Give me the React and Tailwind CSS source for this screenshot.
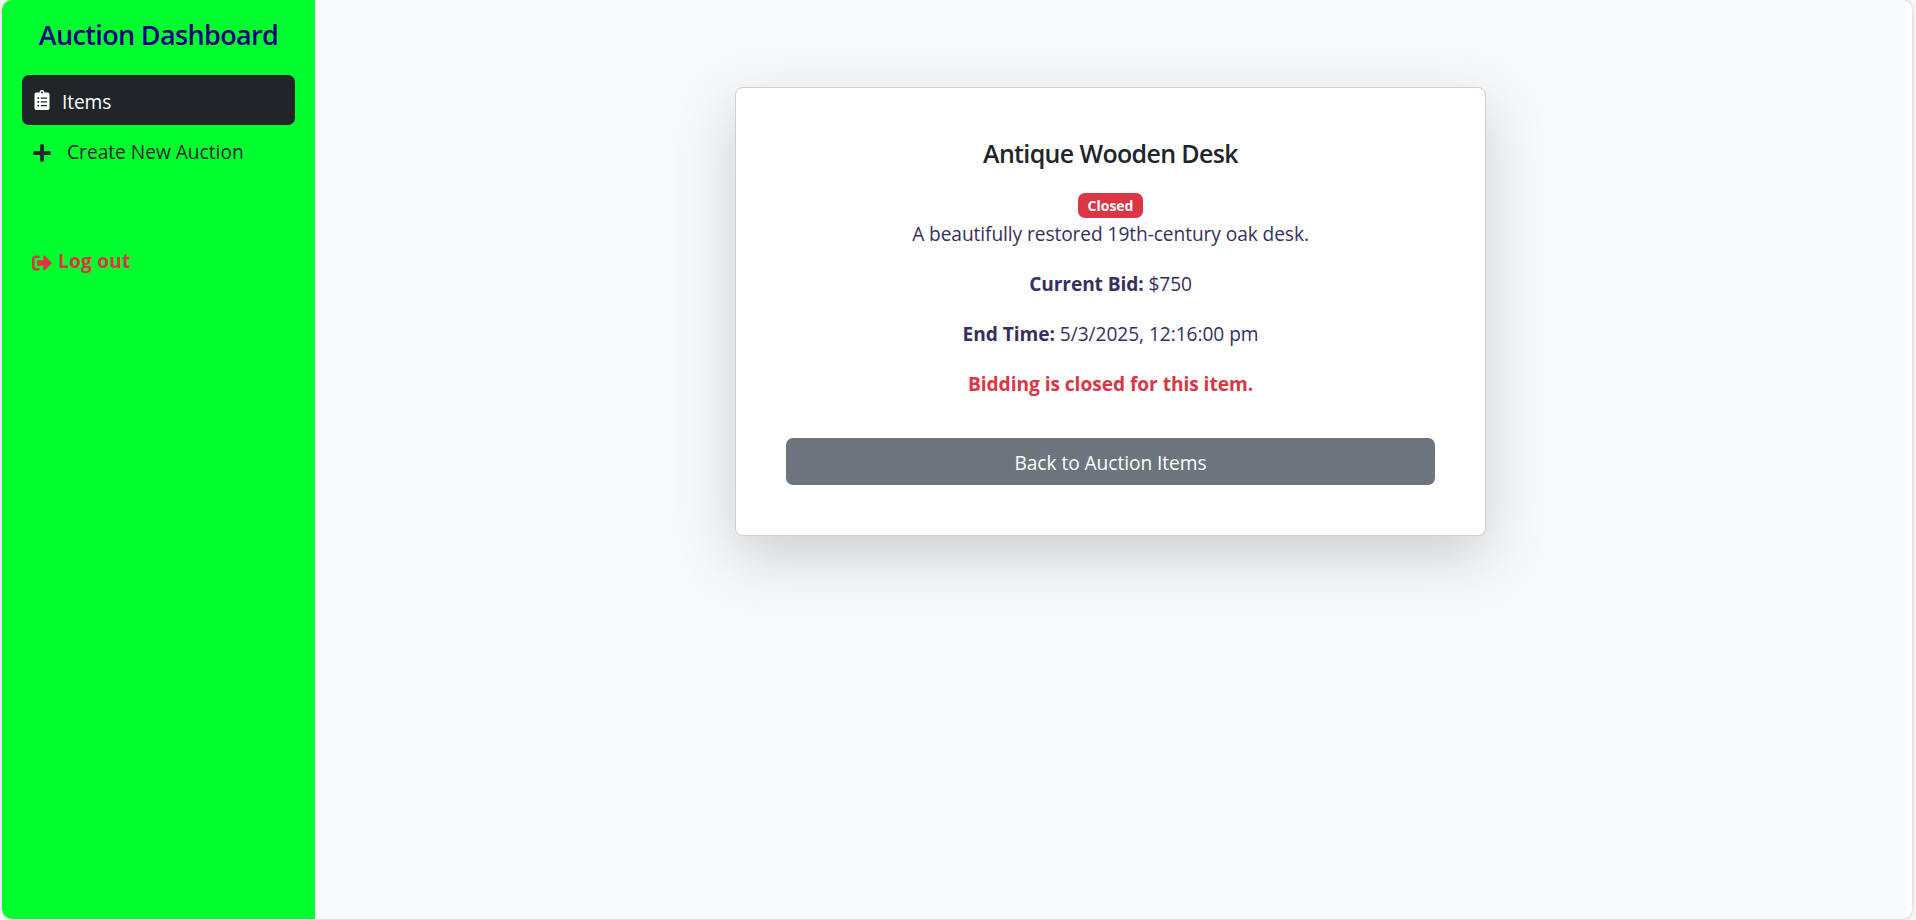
import { FaClipboardList, FaPlus } from "react-icons/fa";

function SignOutIcon({ className }) {
  return (
    <svg viewBox="0 0 512 512" fill="currentColor" className={className}>
      <path d="M497 273L329 441c-15 15-41 4.500-41-17v-96H152c-13.300 0-24-10.700-24-24v-96c0-13.300 10.700-24 24-24h136V88c0-21.400 25.900-32 41-17l168 168c9.300 9.400 9.300 24.600 0 34zM192 436v-40c0-6.600-5.400-12-12-12H96c-17.700 0-32-14.300-32-32V160c0-17.700 14.300-32 32-32h84c6.600 0 12-5.400 12-12V76c0-6.600-5.400-12-12-12H96c-53 0-96 43-96 96v192c0 53 43 96 96 96h84c6.600 0 12-5.400 12-12z" />
    </svg>
  );
}

function Sidebar() {
  return (
    <aside className="flex w-[313px] shrink-0 flex-col bg-[#00ff2f] px-5 pt-[15px]">
      <h1 className="text-center text-[27px] font-semibold leading-[39px] tracking-[-0.65px] whitespace-nowrap text-[#0b0080]">
        Auction Dashboard
      </h1>
      <nav className="mt-[21px] flex flex-col">
        <a className="flex h-[50px] w-[273px] items-center rounded-[7px] bg-[#212529] pl-[10px] text-white">
          <FaClipboardList className="size-5" />
          <span className="ml-[10px] pt-1 tracking-[-0.1px]">Items</span>
        </a>
        <a className="flex h-[50px] items-center pl-[10px] text-[#212529]">
          <FaPlus className="mt-[5px] size-5" />
          <span className="ml-[15px] pt-1">Create New Auction</span>
        </a>
      </nav>
      <a className="mt-[61px] flex h-[50px] items-center pl-[10px] font-bold text-[#dc3545]">
        <SignOutIcon className="mt-1 size-5" />
        <span className="ml-[6px] pt-px tracking-[0.2px]">Log out</span>
      </a>
    </aside>
  );
}

function AuctionCard() {
  return (
    <section className="flex h-[449px] w-[751px] flex-col items-center rounded-[8px] border border-[#cfd0d1] bg-white px-[50px] pt-[48px] text-[#36305f] shadow-[0_20px_60px_rgba(0,0,0,0.175)]">
      <h2 className="text-[25px] font-semibold leading-[34px] tracking-[-0.65px] text-[#212529]">Antique Wooden Desk</h2>
      <span className="mt-[23px] flex h-[25px] items-center rounded-[7px] bg-[#dc3545] px-[10px] text-[14px] font-bold text-white">
        Closed
      </span>
      <p className="mt-px leading-[30px] tracking-[-0.080px]">A beautifully restored 19th-century oak desk.</p>
      <p className="mt-5 leading-[30px] tracking-[-0.1px]"><strong>Current Bid:</strong> $750</p>
      <p className="mt-5 leading-[30px] tracking-[-0.050px]"><strong>End Time:</strong> 5/3/2025, 12:16:00 pm</p>
      <p className="mt-5 font-bold leading-[30px] tracking-[-0.050px] text-[#dc3545]">Bidding is closed for this item.</p>
      <button className="mt-[39px] h-[47px] w-full rounded-[7px] bg-[#6c757d] pt-1 tracking-[-0.050px] text-white">
        Back to Auction Items
      </button>
    </section>
  );
}

export default function App() {
  return (
    <div className="h-[920px] overflow-hidden bg-[#f7f7f7] pr-1 pb-px pl-[2px] font-['Open_Sans',sans-serif] text-[19.150px]">
      <div className="flex h-full overflow-hidden rounded-[10px] bg-white pr-[6px] shadow-[0_0_4px_rgba(0,0,0,0.2)]">
        <Sidebar />
        <main className="flex flex-1 items-start justify-center overflow-hidden bg-[#f8f9fb] pt-[87px]">
          <AuctionCard />
        </main>
      </div>
    </div>
  );
}
